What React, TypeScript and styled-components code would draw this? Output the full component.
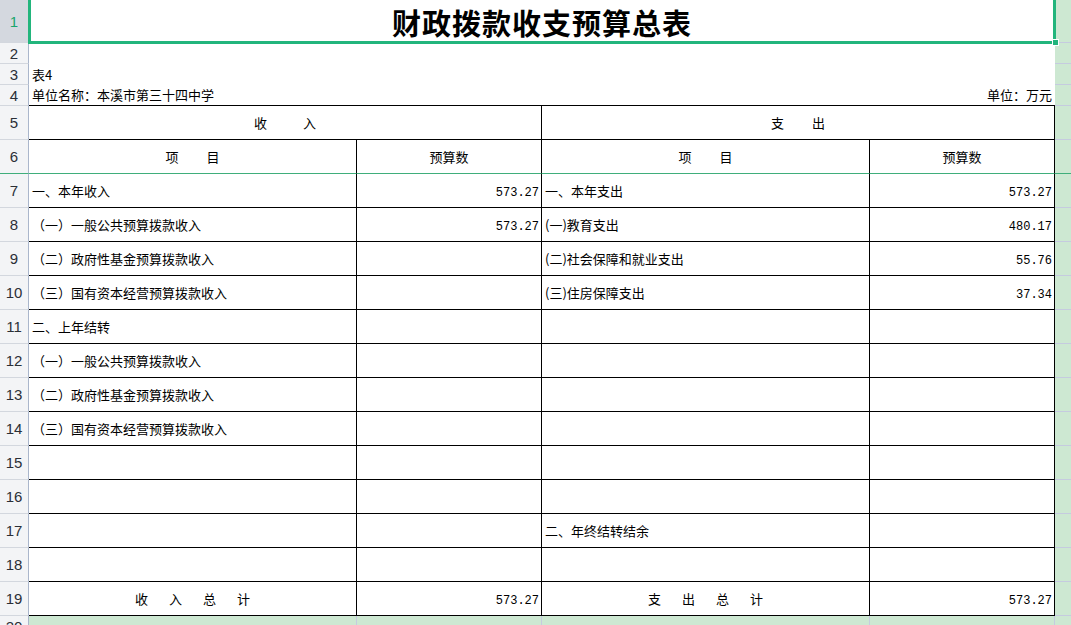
import React from "react";
import styled, { createGlobalStyle, css } from "styled-components";

const GlobalStyle = createGlobalStyle`
  html, body { margin: 0; padding: 0; background: #ffffff; overflow: hidden; }
  * { box-sizing: border-box; }
`;

const CJK = `"Noto Sans CJK SC", "Noto Sans", sans-serif`;
const GREEN = "#22b57c";
const FREEZE = "#3fae7b";
const ZONE = "#cde8d2";
const ZONE_LINE = "#c5cbdf";
const HEAD_LINE = "#d3d7de";

const Sheet = styled.div`
  width: 1071px;
  height: 625px;
  display: flex;
  flex-direction: column;
  overflow: hidden;
  font-family: ${CJK};
  color: #000;
`;

const Row = styled.div<{ $h: number }>`
  display: grid;
  grid-template-columns: 29px 328px 185px 328px 185px 1fr;
  height: ${(p) => p.$h}px;
  flex: none;
`;

const RowHead = styled.div<{ $active?: boolean; $freeze?: boolean; $top?: boolean }>`
  background: ${(p) => (p.$active ? "#d4d8df" : "#f3f4f6")};
  color: ${(p) => (p.$active ? "#1aa56c" : "#2b2f36")};
  border-right: 1px solid #aab6cb;
  border-bottom: 1px solid ${(p) => (p.$freeze ? FREEZE : HEAD_LINE)};
  font-family: "Liberation Sans", Arial, sans-serif;
  font-size: 15px;
  line-height: 17px;
  display: flex;
  align-items: ${(p) => (p.$top ? "flex-start" : "center")};
  padding-top: ${(p) => (p.$top ? "2px" : "0")};
  justify-content: center;
  overflow: hidden;
`;

const Zone = styled.div<{ $freeze?: boolean }>`
  background: ${ZONE};
  border-bottom: 1px solid ${(p) => (p.$freeze ? FREEZE : ZONE_LINE)};
`;

const Banner = styled.div`
  grid-column: span 4;
  position: relative;
  display: flex;
  align-items: center;
  justify-content: center;
  font-size: 29px;
  font-weight: 700;
  letter-spacing: 1px;
  padding-top: 1px;
`;

const Selection = styled.div`
  position: absolute;
  left: -1px;
  right: -1px;
  top: -3px;
  bottom: -1px;
  border: 3px solid ${GREEN};
  pointer-events: none;
  z-index: 2;
`;

const Handle = styled.div`
  position: absolute;
  right: -4px;
  bottom: -3px;
  width: 7px;
  height: 7px;
  background: ${GREEN};
  border: 1px solid #ffffff;
  z-index: 3;
`;

const Plain = styled.div<{ $line?: boolean }>`
  grid-column: span 4;
  display: flex;
  align-items: flex-end;
  justify-content: space-between;
  padding: 0 3px 2px 3px;
  font-size: 13px;
  line-height: 17px;
  border-bottom: ${(p) => (p.$line ? "1px solid #000" : "none")};
`;

const Cell = styled.div<{
  $span?: number;
  $align?: "left" | "center" | "right";
  $freeze?: boolean;
  $num?: boolean;
}>`
  grid-column: span ${(p) => p.$span ?? 1};
  border-right: 1px solid #000;
  border-bottom: 1px solid ${(p) => (p.$freeze ? FREEZE : "#000")};
  display: flex;
  align-items: center;
  justify-content: ${(p) =>
    p.$align === "right" ? "flex-end" : p.$align === "center" ? "center" : "flex-start"};
  padding: 0 ${(p) => (p.$num ? "2px" : "3px")} 0 3px;
  font-size: 13px;
  white-space: nowrap;
  overflow: hidden;
  ${(p) =>
    p.$num &&
    css`
      font-family: "Liberation Mono", "DejaVu Sans Mono", monospace;
      font-size: 12px;
      padding-top: 4px;
    `}
`;

const Spaced = styled.span<{ $gap: number }>`
  display: inline-flex;
  gap: ${(p) => p.$gap}px;
`;

const Tail = styled.div`
  grid-column: span 4;
  display: grid;
  grid-template-columns: 328px 185px 328px 185px;
  background: ${ZONE};
`;

const TailCell = styled.div`
  border-right: 1px solid ${ZONE_LINE};
`;

const SpacedText: React.FC<{ text: string; gap: number }> = ({ text, gap }) => (
  <Spaced $gap={gap}>
    {text.split("").map((c, i) => (
      <span key={i}>{c}</span>
    ))}
  </Spaced>
);

const body: [string, string, string, string][] = [
  ["一、本年收入", "573.27", "一、本年支出", "573.27"],
  ["（一）一般公共预算拨款收入", "573.27", "(一)教育支出", "480.17"],
  ["（二）政府性基金预算拨款收入", "", "(二)社会保障和就业支出", "55.76"],
  ["（三）国有资本经营预算拨款收入", "", "(三)住房保障支出", "37.34"],
  ["二、上年结转", "", "", ""],
  ["（一）一般公共预算拨款收入", "", "", ""],
  ["（二）政府性基金预算拨款收入", "", "", ""],
  ["（三）国有资本经营预算拨款收入", "", "", ""],
  ["", "", "", ""],
  ["", "", "", ""],
  ["", "", "二、年终结转结余", ""],
  ["", "", "", ""],
];

export default function App() {
  return (
    <>
      <GlobalStyle />
      <Sheet>
        <Row $h={43}>
          <RowHead $active>1</RowHead>
          <Banner>
            财政拨款收支预算总表
            <Selection />
            <Handle />
          </Banner>
          <Zone />
        </Row>
        <Row $h={21}>
          <RowHead>2</RowHead>
          <Plain />
          <Zone />
        </Row>
        <Row $h={21}>
          <RowHead>3</RowHead>
          <Plain>表4</Plain>
          <Zone />
        </Row>
        <Row $h={21}>
          <RowHead>4</RowHead>
          <Plain $line>
            <span>单位名称：本溪市第三十四中学</span>
            <span>单位：万元</span>
          </Plain>
          <Zone />
        </Row>
        <Row $h={34}>
          <RowHead>5</RowHead>
          <Cell $span={2} $align="center">
            <SpacedText text="收入" gap={36} />
          </Cell>
          <Cell $span={2} $align="center">
            <SpacedText text="支出" gap={28} />
          </Cell>
          <Zone />
        </Row>
        <Row $h={34}>
          <RowHead $freeze>6</RowHead>
          <Cell $align="center" $freeze>
            <SpacedText text="项目" gap={28} />
          </Cell>
          <Cell $align="center" $freeze>
            预算数
          </Cell>
          <Cell $align="center" $freeze>
            <SpacedText text="项目" gap={28} />
          </Cell>
          <Cell $align="center" $freeze>
            预算数
          </Cell>
          <Zone $freeze />
        </Row>
        {body.map((r, i) => (
          <Row $h={34} key={i}>
            <RowHead>{i + 7}</RowHead>
            <Cell>{r[0]}</Cell>
            <Cell $align="right" $num>
              {r[1]}
            </Cell>
            <Cell>{r[2]}</Cell>
            <Cell $align="right" $num>
              {r[3]}
            </Cell>
            <Zone />
          </Row>
        ))}
        <Row $h={34}>
          <RowHead>19</RowHead>
          <Cell $align="center">
            <SpacedText text="收入总计" gap={21} />
          </Cell>
          <Cell $align="right" $num>
            573.27
          </Cell>
          <Cell $align="center">
            <SpacedText text="支出总计" gap={21} />
          </Cell>
          <Cell $align="right" $num>
            573.27
          </Cell>
          <Zone />
        </Row>
        <Row $h={30}>
          <RowHead $top>20</RowHead>
          <Tail>
            <TailCell />
            <TailCell />
            <TailCell />
            <TailCell />
          </Tail>
          <Zone />
        </Row>
      </Sheet>
    </>
  );
}
